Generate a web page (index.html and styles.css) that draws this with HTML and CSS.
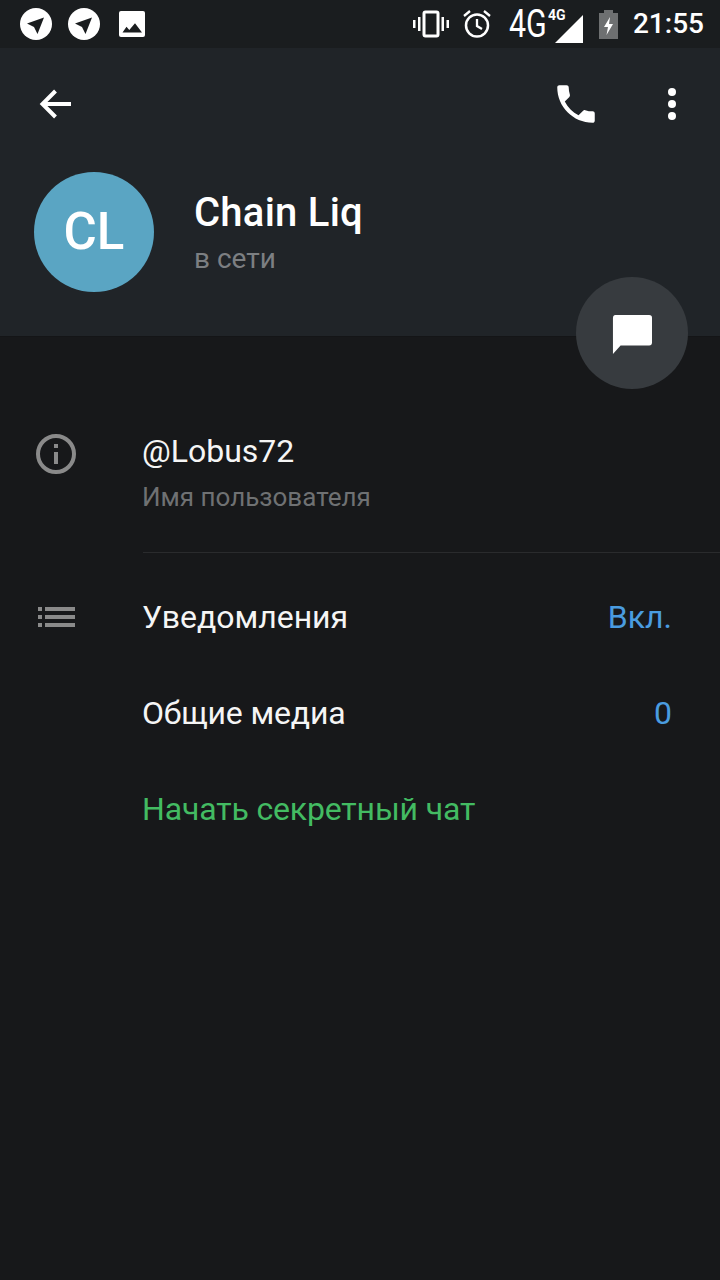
FILE: index.html
```html
<!DOCTYPE html>
<html lang="ru">
    <head>
        <meta charset="UTF-8">
        <meta name="viewport" content="width=device-width, initial-scale=1.0">
        <title>Chain Liq</title>
        <link rel="stylesheet" href="styles.css">
    </head>
    <body>
        <!-- status bar -->
        <div class="status">
            <div class="status-left">
                <svg class="note" width="32" height="32" viewBox="0 0 32 32"><circle cx="16" cy="16" r="16" fill="#fff"/><path d="M7 15.500 24 9.500 17.500 26 14 19Z" fill="#1a1d1f"/></svg>
                <svg class="note" width="32" height="32" viewBox="0 0 32 32"><circle cx="16" cy="16" r="16" fill="#fff"/><path d="M7 15.500 24 9.500 17.500 26 14 19Z" fill="#1a1d1f"/></svg>
                <svg class="note pic" width="26" height="26" viewBox="0 0 26 26"><rect width="26" height="26" rx="2" fill="#fff"/><path d="M3.500 21.500 7.500 15.700 10.300 19 16 12.300 23 21.500Z" fill="#1a1d1f"/></svg>
            </div>
            <div class="status-right">
                <svg class="vibrate" width="36" height="28" viewBox="0 0 36 28"><rect x="11" y="2" width="14" height="24" rx="1.500" fill="none" stroke="#fff" stroke-width="3"/><path d="M5 7h2.500v14H5zM28.500 7H31v14h-2.500zM0 10h2.500v8H0zM33.500 10H36v8h-2.500z" fill="#fff"/></svg>
                <svg class="alarm" width="30" height="30" viewBox="0 0 30 30"><circle cx="15" cy="16.500" r="11" fill="none" stroke="#fff" stroke-width="2.500"/><path d="M15 10v7l5 3M2 7l6-5M28 7l-6-5" fill="none" stroke="#fff" stroke-width="2.300"/></svg>
                <span class="net">4G</span>
                <div class="signal">
                    <span class="net-small">4G</span>
                    <svg width="29" height="28" viewBox="0 0 29 28"><path d="M0 28 28 0V28Z" fill="#fff"/></svg>
                </div>
                <svg class="battery" width="19" height="29" viewBox="0 0 19 29"><path d="M5 0h9v3h5v26H0V3h5z" fill="#6e7071"/><path d="M11 7 5 17h4l-1.500 8L14 14h-4z" fill="#fff"/></svg>
                <span class="time">21:55</span>
            </div>
        </div>

        <div class="header">
            <div class="toolbar">
                <svg width="36" height="32" viewBox="0 0 36 32"><path d="M34 16H5M18.500 3 5.500 16 18.500 29" fill="none" stroke="#fff" stroke-width="4"/></svg>
                <div class="toolbar-right">
                    <svg width="50" height="50" viewBox="0 0 24 24"><path d="M6.620 10.790c1.440 2.830 3.760 5.140 6.590 6.590l2.200-2.200c.27-.27.670-.36 1.020-.24 1.120.37 2.330.57 3.570.57.550 0 1 .45 1 1V20c0 .55-.45 1-1 1C10.610 21 3 13.390 3 4c0-.55.45-1 1-1h3.500c.55 0 1 .45 1 1 0 1.250.2 2.450.57 3.570.11.350.03.740-.25 1.020z" fill="#fff"/></svg>
                    <svg width="12" height="34" viewBox="0 0 12 34"><circle cx="6" cy="5" r="4" fill="#fff"/><circle cx="6" cy="17" r="4" fill="#fff"/><circle cx="6" cy="29" r="4" fill="#fff"/></svg>
                </div>
            </div>
            <div class="profile">
                <div class="avatar">CL</div>
                <div>
                    <div class="name">Chain Liq</div>
                    <div class="online">в сети</div>
                </div>
            </div>
            <div class="fab">
                <svg class="fab-icon" width="40" height="40" viewBox="0 0 42 42"><path d="M3 0H39a3 3 0 0 1 3 3V29a3 3 0 0 1-3 3H9L1 41V3a3 3 0 0 1 2-3Z" fill="#fff"/></svg>
            </div>
        </div>

        <div class="info">
            <svg class="row-icon" width="40" height="40" viewBox="0 0 40 40"><circle cx="20" cy="20" r="18" fill="none" stroke="#8a8a8a" stroke-width="4"/><path d="M18 18h4v12h-4zM18 10h4v4h-4z" fill="#8a8a8a"/></svg>
            <div>
                <div class="username">@Lobus72</div>
                <div class="hint">Имя пользователя</div>
            </div>
        </div>
        <div class="divider"></div>

        <div class="row">
            <svg class="row-icon" width="40" height="24" viewBox="0 0 40 24"><path d="M2 2h4v4H2zM2 10h4v4H2zM2 18h4v4H2zM9 2h30v4H9zM9 10h30v4H9zM9 18h30v4H9z" fill="#8a8a8a"/></svg>
            <span class="row-label">Уведомления</span>
            <span class="row-value">Вкл.</span>
        </div>
        <div class="row">
            <span class="row-label tight">Общие медиа</span>
            <span class="row-value">0</span>
        </div>
        <div class="row">
            <span class="row-label secret">Начать секретный чат</span>
        </div>
    </body>
</html>
```

FILE: styles.css
```css
*{
    margin: 0;
    padding: 0;
    box-sizing: border-box;
}
body{
    width: 720px;
    height: 1280px;
    overflow: hidden;
    background-color: #17181a;
    font-family: Roboto, "Noto Sans", sans-serif;
    color: #fff;
}
svg{
    flex: none;
    display: block;
}
.status{
    height: 48px;
    background-color: #1a1d1f;
    display: flex;
    justify-content: space-between;
    align-items: center;
    padding: 0 16px 0 20px;
}
.status-left{
    display: flex;
    align-items: center;
    gap: 16px;
}
.pic{
    margin-left: 3px;
}
.status-right{
    display: flex;
    align-items: center;
}
.vibrate{
    margin-right: 13px;
}
.alarm{
    margin-right: 17px;
}
.net{
    width: 38px;
    font-size: 38px;
    font-weight: 400;
    line-height: 48px;
    white-space: nowrap;
    transform: scaleX(0.8);
    transform-origin: left center;
}
.signal{
    width: 37px;
    height: 37px;
    display: flex;
    align-items: flex-end;
    justify-content: flex-end;
    position: relative;
    margin-right: 15px;
}
.net-small{
    position: absolute;
    left: 1px;
    top: 1px;
    font-size: 14px;
    font-weight: 700;
    line-height: 16px;
}
.battery{
    margin-right: 15px;
}
.time{
    font-size: 28px;
    font-weight: 500;
    line-height: 48px;
}
.header{
    height: 289px;
    background-color: #202428;
    border-bottom: 1px solid #141517;
    position: relative;
}
.toolbar{
    height: 112px;
    display: flex;
    justify-content: space-between;
    align-items: center;
    padding: 0 42px 0 37px;
}
.toolbar-right{
    display: flex;
    align-items: center;
    gap: 65px;
}
.profile{
    display: flex;
    align-items: center;
    gap: 40px;
    padding: 12px 0 0 34px;
}
.avatar{
    width: 120px;
    height: 120px;
    border-radius: 50%;
    background-color: #5aa5c3;
    font-size: 51px;
    font-weight: 500;
    line-height: 120px;
    text-align: center;
}
.name{
    font-size: 40px;
    font-weight: 500;
    line-height: 48px;
    margin-top: 1px;
    letter-spacing: 0.25px;
}
.online{
    font-size: 28px;
    line-height: 36px;
    margin-top: 4px;
    color: #7c7f82;
}
.fab{
    position: absolute;
    right: 32px;
    top: 229px;
    width: 112px;
    height: 112px;
    border-radius: 50%;
    background-color: #373b3f;
    display: flex;
    align-items: center;
    justify-content: center;
}
.fab-icon{
    margin-top: 4px;
}
.info{
    display: flex;
    height: 215px;
    padding: 97px 0 0 36px;
}
.info .row-icon{
    margin: 0 66px 0 0;
}
.username{
    font-size: 32px;
    line-height: 40px;
    margin-top: -3px;
    color: #f5f5f5;
}
.hint{
    font-size: 26px;
    line-height: 36px;
    margin-top: 8px;
    color: #6f7173;
}
.divider{
    height: 1px;
    margin-left: 143px;
    background-color: #2a2b2d;
}
.row{
    height: 96px;
    display: flex;
    align-items: center;
    padding: 0 48px 0 142px;
    position: relative;
    font-size: 32px;
}
.row:nth-child(5){
    margin-top: 16px;
}
.row .row-icon{
    position: absolute;
    left: 36px;
    top: 36px;
}
.row-label{
    color: #f5f5f5;
}
.row-value{
    margin-left: auto;
    color: #4a9ce0;
}
.tight{
    letter-spacing: -0.15px;
}
.secret{
    color: #43bb62;
    letter-spacing: -0.16px;
}
```
